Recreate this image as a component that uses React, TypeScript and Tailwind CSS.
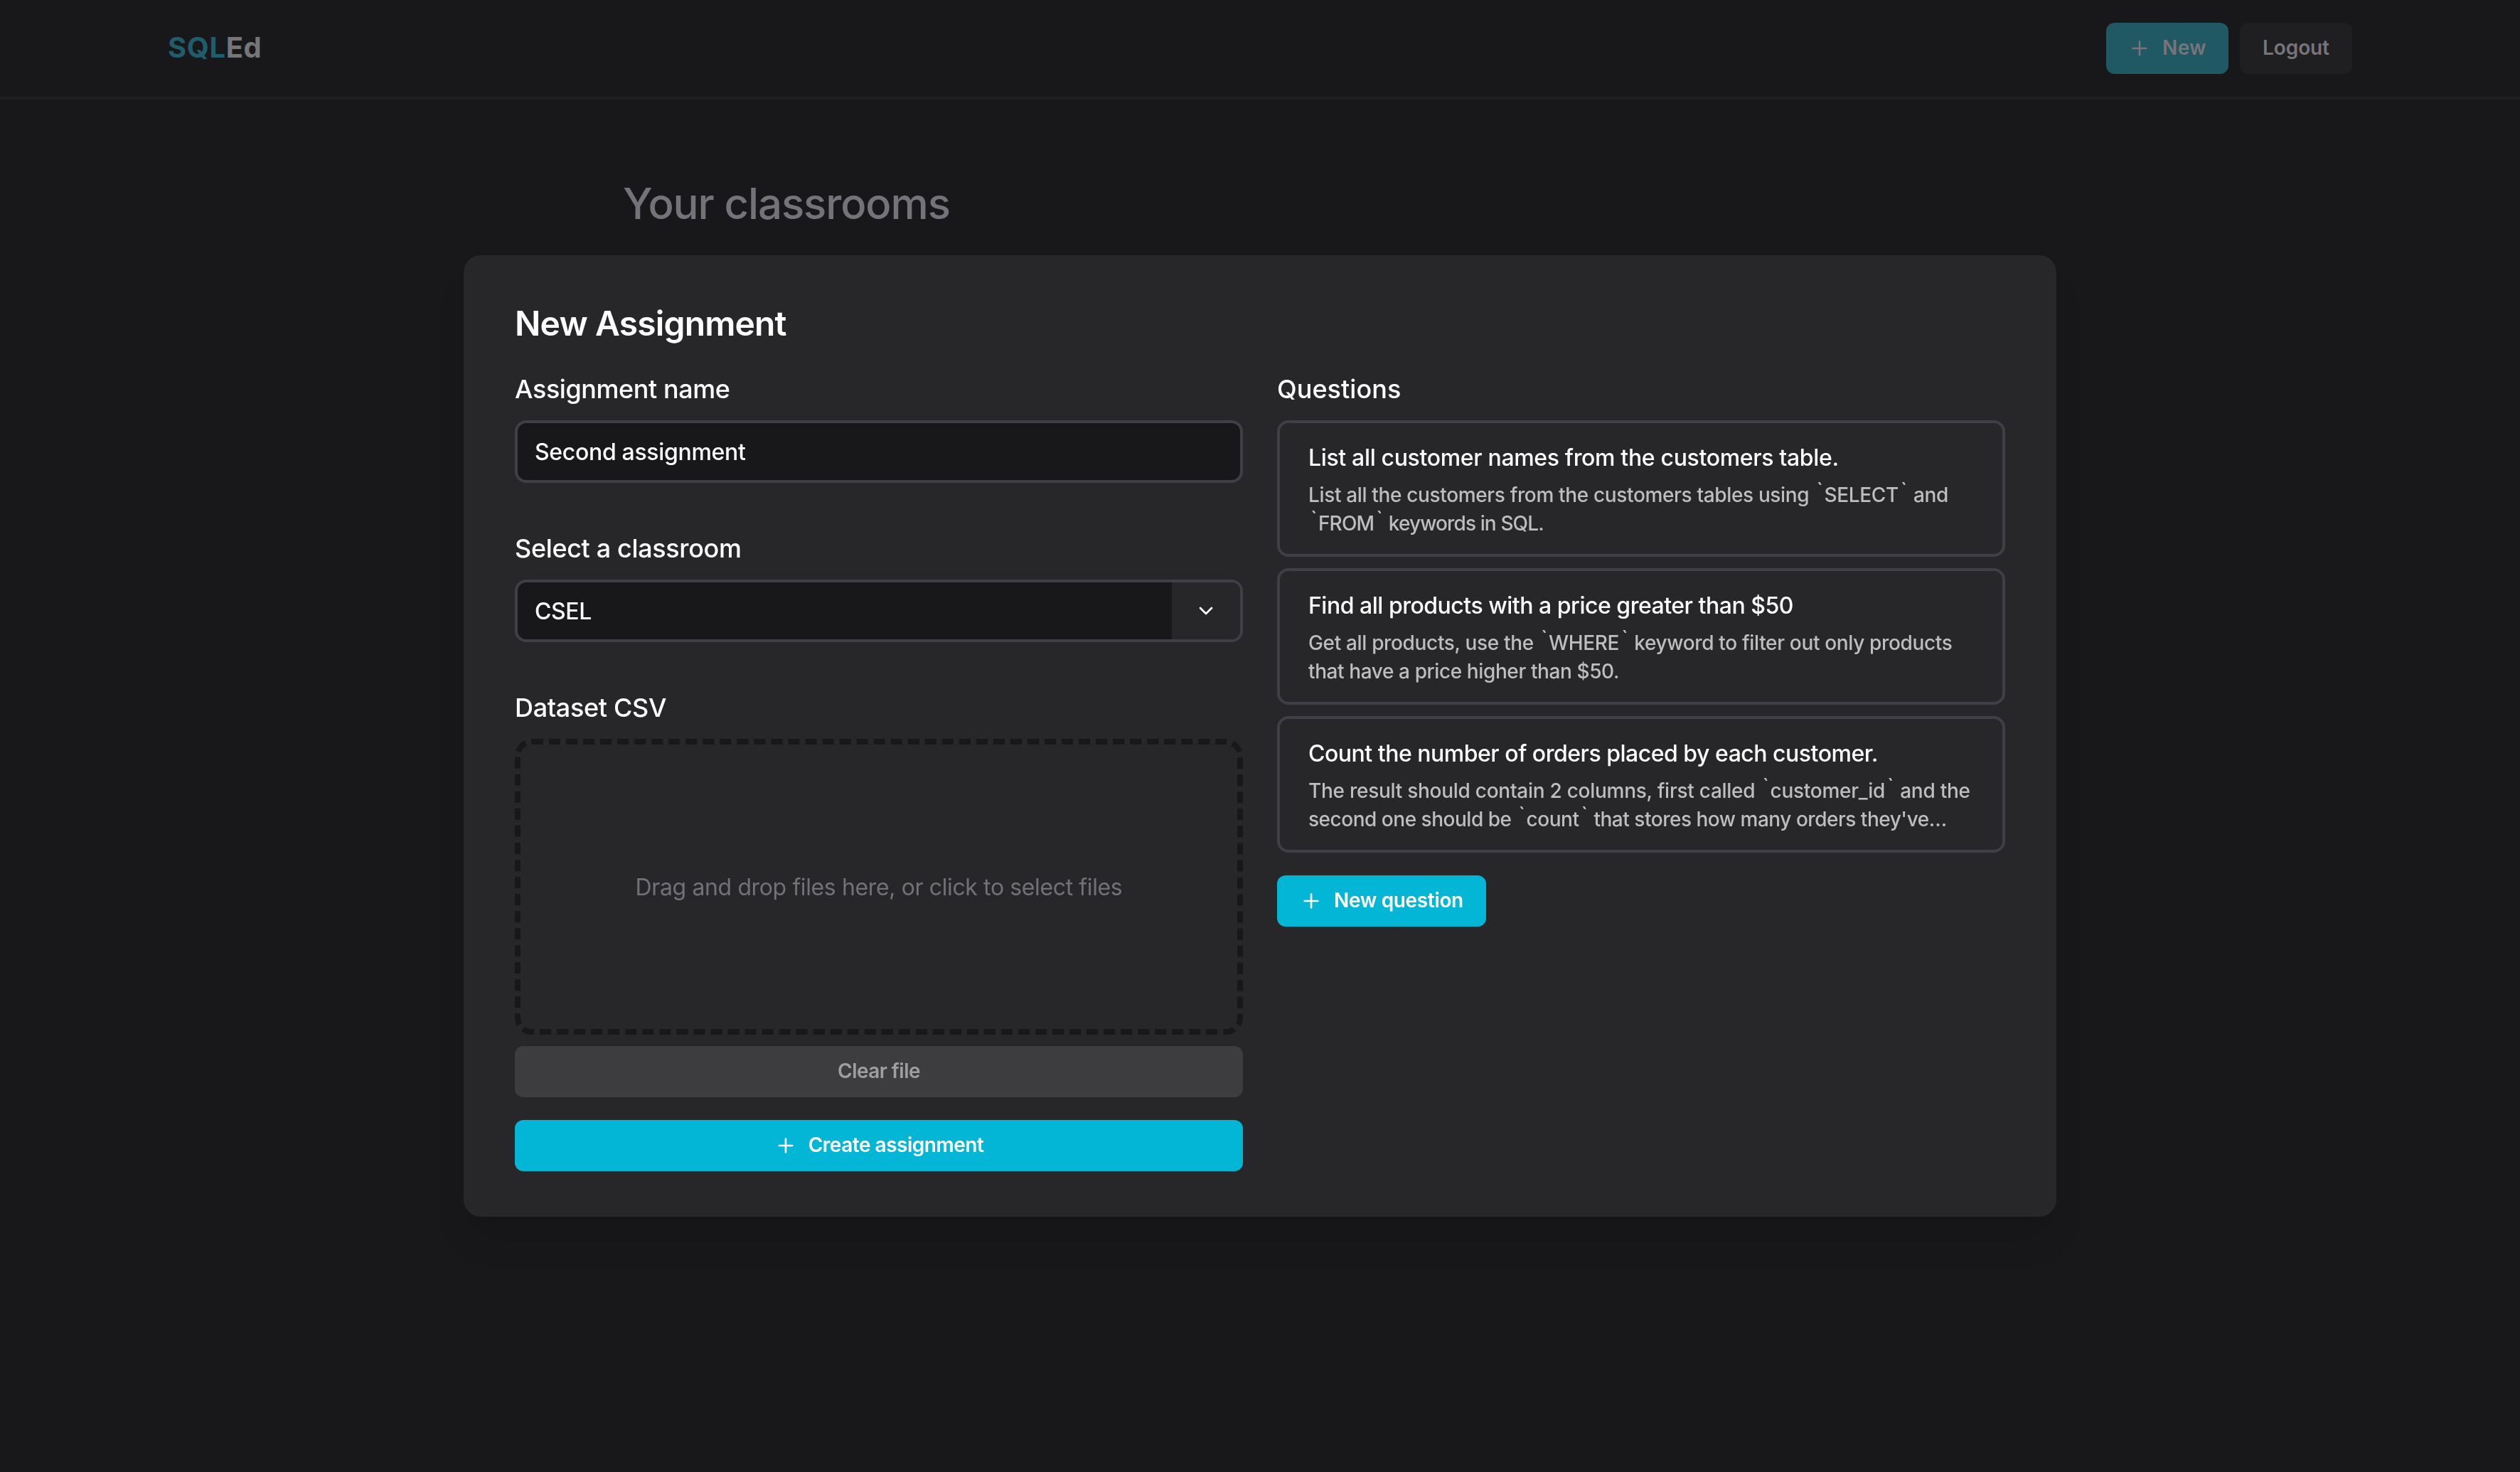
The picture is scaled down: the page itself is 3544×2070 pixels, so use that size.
import React from "react";
import { ChevronDown, Plus } from "lucide-react";
import clsx from "clsx";

const questions = [
  {
    title: "List all customer names from the customers table.",
    titleClass: "tracking-[-0.34px]",
    lines: [
      { text: "List all the customers from the customers tables using `SELECT` and", className: "tracking-[-0.35px]" },
      { text: "`FROM` keywords in SQL.", className: "tracking-[-0.88px]" },
    ],
  },
  {
    title: "Find all products with a price greater than $50",
    titleClass: "tracking-[-0.49px]",
    lines: [
      { text: "Get all products, use the `WHERE` keyword to filter out only products", className: "tracking-[-0.34px]" },
      { text: "that have a price higher than $50.", className: "tracking-[-0.4px]" },
    ],
  },
  {
    title: "Count the number of orders placed by each customer.",
    titleClass: "tracking-[-0.49px]",
    lines: [
      { text: "The result should contain 2 columns, first called `customer_id` and the", className: "tracking-[-0.27px]" },
      { text: "second one should be `count` that stores how many orders they've…", className: "tracking-[-0.48px]" },
    ],
  },
];

const Button = ({
  className,
  icon,
  children,
}: {
  className?: string;
  icon?: boolean;
  children: React.ReactNode;
}) => (
  <button
    className={clsx(
      "flex h-18 items-center justify-center gap-4 rounded-xl text-[28px] leading-10 font-semibold whitespace-nowrap",
      className
    )}
  >
    {icon && <Plus size={32} strokeWidth={2} />}
    <span className="-mt-0.5">{children}</span>
  </button>
);

const Label = ({ className, children }: { className?: string; children: React.ReactNode }) => (
  <label className={clsx("block text-4xl leading-14 font-medium", className)}>{children}</label>
);

// Backticks sit higher and wider than the rest of the text
const Line = ({ text, className }: { text: string; className: string }) => (
  <span className={clsx("block whitespace-pre", className)}>
    {text.split(/(`)/).map((part, i) =>
      part === "`" ? (
        <span key={i} className="relative -top-[7px] inline-block w-[14px] pl-[3px]">
          `
        </span>
      ) : (
        part
      )
    )}
  </span>
);

const Header = () => (
  <header className="border-b-4 border-[#1f1f21]">
    <div className="mx-auto flex h-34 w-[3072px] items-center justify-between">
      <h1 className="mb-0.5 text-[40px] leading-14 font-bold tracking-[0.6px] text-[#76757a]">
        <span className="text-[#205d6a]">SQL</span>Ed
      </h1>
      <div className="flex gap-4">
        <Button icon className="w-[172px] bg-[#205863] tracking-[0.3px] text-[#77757a]">
          New
        </Button>
        <Button className="w-[158px] bg-[#1f1f21] tracking-[-0.12px] text-[#76757a]">
          Logout
        </Button>
      </div>
    </div>
  </header>
);

const QuestionCard = ({ title, titleClass, lines }: (typeof questions)[number]) => (
  <li className="rounded-2xl border-4 border-[#3f3f46] px-10 pt-[25px] pb-[23px]">
    <h4 className={clsx("text-[32px] leading-12 font-medium", titleClass)}>{title}</h4>
    <p className="mt-2 text-[28px] leading-10 font-medium text-[#bebebf]">
      {lines.map((line) => (
        <Line key={line.text} {...line} />
      ))}
    </p>
  </li>
);

const AssignmentForm = () => (
  <div className="w-[1024px]">
    <Label className="tracking-[-0.44px]">Assignment name</Label>
    <div className="mt-4 flex h-22 items-center rounded-2xl border-4 border-[#3f3f46] bg-[#18181b] px-6 pt-0.5 text-[32px] font-medium tracking-[-0.32px]">
      Second assignment
    </div>

    <Label className="mt-16 tracking-[-0.36px]">Select a classroom</Label>
    <div className="mt-4 flex h-22 overflow-hidden rounded-2xl border-4 border-[#3f3f46] bg-[#18181b]">
      <div className="flex flex-1 items-center px-6 pt-0.5 text-[32px] font-medium tracking-[-0.4px]">
        CSEL
      </div>
      <div className="flex w-24 items-center justify-center bg-[#27272a]">
        <ChevronDown size={32} strokeWidth={2} />
      </div>
    </div>

    <Label className="mt-16 tracking-[-0.33px]">Dataset CSV</Label>
    <div className="mt-4 flex h-[416px] items-center justify-center rounded-3xl border-8 border-dashed border-[#18181b] pt-0.5 text-[32px] tracking-[-0.38px] text-[#717178]">
      Drag and drop files here, or click to select files
    </div>
    <Button className="mt-4 w-full bg-[#3d3d3f] tracking-[-0.54px] text-[#9f9fa1]">
      Clear file
    </Button>
    <Button icon className="mt-8 w-full bg-[#04b6d6] tracking-[-0.48px]">
      Create assignment
    </Button>
  </div>
);

const NewAssignmentModal = () => (
  <div className="fixed inset-0 flex items-center justify-center">
    <div className="w-[2240px] rounded-3xl bg-[#27272a] px-18 py-16 text-white shadow-[0_40px_50px_-10px_rgba(0,0,0,0.1),0_16px_20px_-12px_rgba(0,0,0,0.1)]">
      <h3 className="text-5xl leading-16 font-semibold tracking-[-0.86px]">New Assignment</h3>
      <div className="mt-8 flex gap-12">
        <AssignmentForm />
        <div className="w-[1024px]">
          <Label className="tracking-[0.05px]">Questions</Label>
          <ul className="mt-4 flex flex-col gap-4">
            {questions.map((question) => (
              <QuestionCard key={question.title} {...question} />
            ))}
          </ul>
          <Button icon className="mt-8 w-[294px] bg-[#04b6d6] tracking-[-0.34px]">
            New question
          </Button>
        </div>
      </div>
    </div>
  </div>
);

const App = () => {
  return (
    <div className="h-[2070px] bg-[#18181b] font-['Inter',sans-serif]">
      <Header />
      <main className="mx-auto w-[1792px] pt-[110px]">
        <h2 className="text-6xl leading-18 font-medium tracking-[-1.12px] text-[#747379]">
          Your classrooms
        </h2>
      </main>
      <NewAssignmentModal />
    </div>
  );
};

export default App;
